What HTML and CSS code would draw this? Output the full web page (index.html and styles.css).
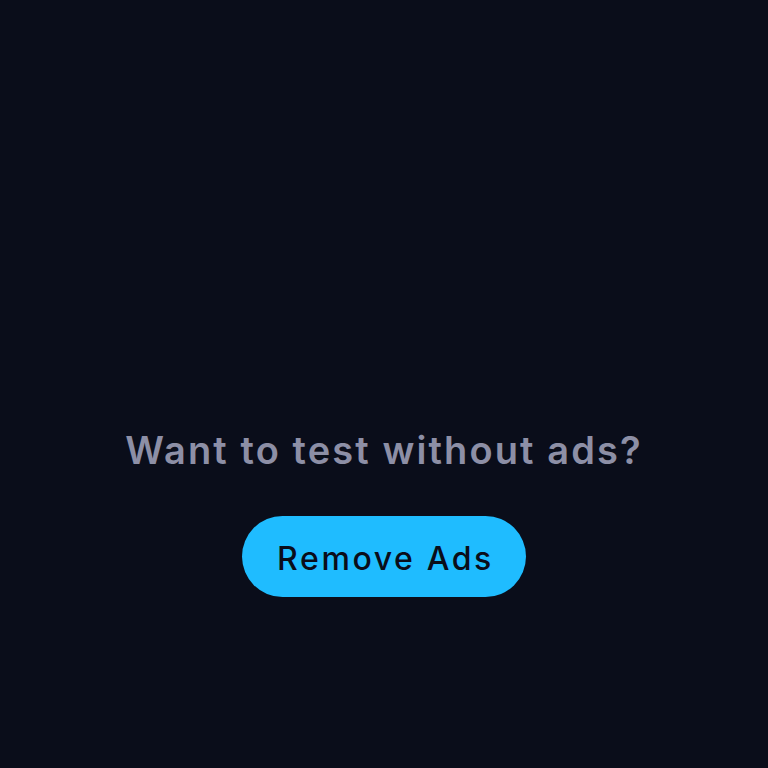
FILE: index.html
```html
<!DOCTYPE html>
<html>
<head>
<meta charset="utf-8">
<link rel="stylesheet" href="styles.css">
</head>
<body>
<main class="page">
  <div class="ad-slot"></div>
  <h1 class="title">Want to test without ads?</h1>
  <button class="remove-btn">Remove Ads</button>
</main>
</body>
</html>
```
FILE: styles.css
```css
html, body {
  margin: 0;
  padding: 0;
  background: #0a0d1a;
  height: 100%;
}
.page {
  display: flex;
  flex-direction: column;
  align-items: center;
  font-family: "Inter", "DejaVu Sans", sans-serif;
}
.ad-slot {
  height: 425px;
}
.title {
  margin: 0;
  font-size: 38px;
  line-height: 50px;
  font-weight: 600;
  color: #8d8fa6;
  letter-spacing: 2.1px;
}
.remove-btn {
  margin-top: 41px;
  width: 284px;
  height: 81px;
  border: none;
  border-radius: 41px;
  background: #1fbcff;
  color: #0a0d1a;
  font-family: "Inter", "DejaVu Sans", sans-serif;
  font-size: 32px;
  font-weight: 500;
  letter-spacing: 2.6px;
  padding: 3px 0 0 3px;
}
```
